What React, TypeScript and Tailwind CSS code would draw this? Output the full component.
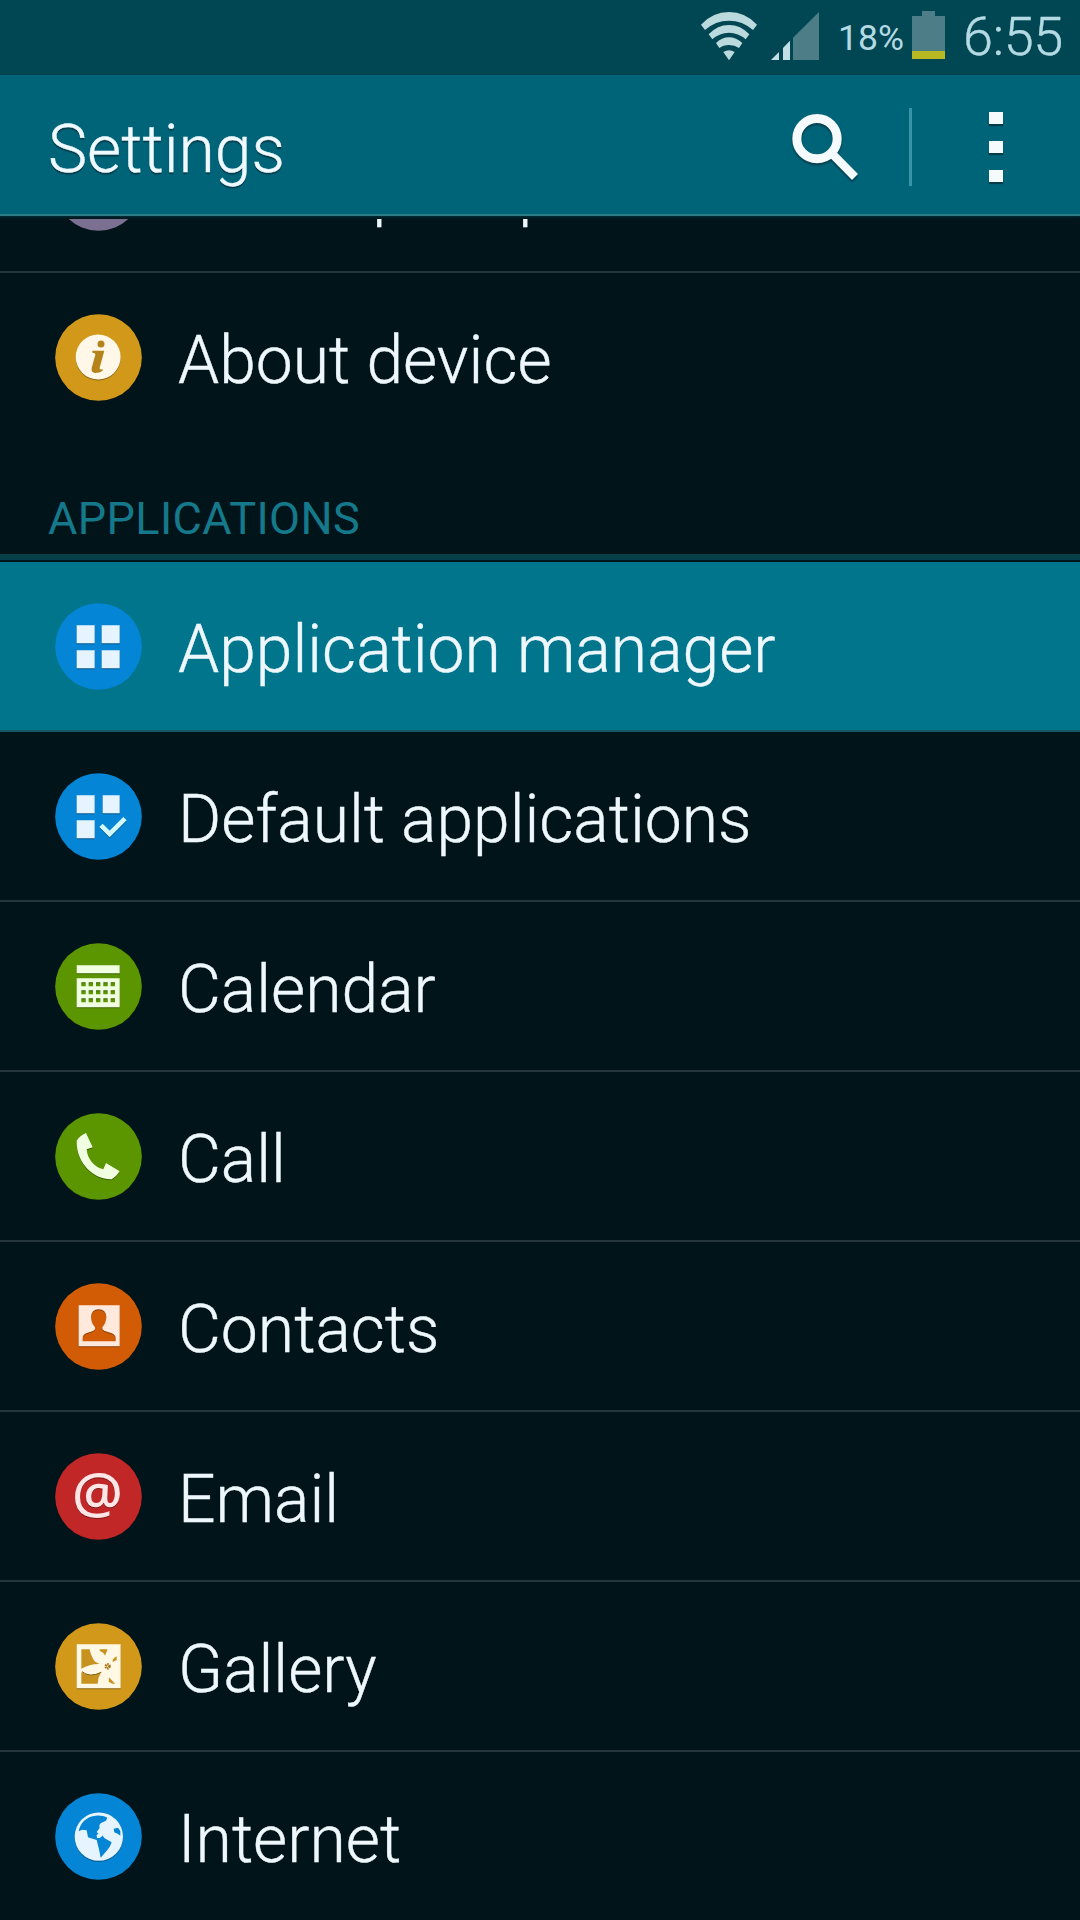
import type { ReactNode } from "react";

const SHADOW = "drop-shadow(0px 3px 1px rgba(0,0,0,0.35))";

function Badge({ color, children }: { color: string; children?: ReactNode }) {
  return (
    <svg className="h-[87px] w-[87px] shrink-0" viewBox="46 38 261 261">
      <circle cx="176.5" cy="168.5" r="130" fill={color} />
      <g style={{ filter: SHADOW }}>{children}</g>
    </svg>
  );
}

const InfoIcon = () => (
  <Badge color="#d2981a">
    <circle cx="175.5" cy="167" r="67.5" fill="#fff8e8" />
    <circle cx="184" cy="128" r="10.5" fill="#b5831c" />
    <path
      d="M158 148H194L180 199Q178 206 189 204V208Q180 215 167 215Q153 214 156 200L167 160Q168 154 158 154Z"
      fill="#b5831c"
    />
  </Badge>
);

const GridIcon = () => (
  <Badge color="#0585d5">
    <path d="M111 105h54v54h-54zM186 105h54v54h-54zM111 180h54v54h-54zM186 180h54v54h-54z" fill="#e6f4ff" />
  </Badge>
);

const GridCheckIcon = () => (
  <Badge color="#0585d5">
    <path d="M111 105h54v54h-54zM189 105h51v54h-51zM111 180h54v54h-54z" fill="#e6f4ff" />
    <path d="M184 195L210 221L256 175" fill="none" stroke="#d2f8ff" strokeWidth="14" />
  </Badge>
);

const CalendarIcon = () => (
  <Badge color="#5b9500">
    <path d="M111 105h129v24h-129z" fill="#efffe0" />
    <path
      fillRule="evenodd"
      fill="#efffe0"
      d="M111 144h129v87h-129zM125 156h13v12h-13zM147 156h13v12h-13zM169 156h13v12h-13zM191 156h13v12h-13zM213 156h13v12h-13zM125 180h13v12h-13zM147 180h13v12h-13zM169 180h13v12h-13zM191 180h13v12h-13zM213 180h13v12h-13zM125 204h13v12h-13zM147 204h13v12h-13zM169 204h13v12h-13zM191 204h13v12h-13zM213 204h13v12h-13z"
    />
  </Badge>
);

const CallIcon = () => (
  <Badge color="#5b9500">
    <path
      d="M139 98L159 141L141 147C143 176 164 201 191 207L199 188L240 213C234 223 226 230 216 237C168 239 109 194 111 121C117 111 127 104 139 98Z"
      fill="#efffe0"
    />
  </Badge>
);

const ContactsIcon = () => (
  <Badge color="#d25c06">
    <path
      fillRule="evenodd"
      fill="#ffe9dc"
      d="M117 105H240V228H117ZM129 213H228V203Q227 192 214 188L195 182Q187 179 188 171Q199 159 200 141Q199 117 177 117Q155 117 154 141Q155 159 166 171Q168 179 160 182L142 188Q129 192 129 203Z"
    />
  </Badge>
);

const EmailIcon = () => (
  <Badge color="#c12727">
    <text
      x="173.5"
      y="219"
      textAnchor="middle"
      fontFamily="'Open Sans', 'Noto Sans', sans-serif"
      fontWeight="600"
      fontSize="170"
      fill="#ffe6e6"
    >
      @
    </text>
  </Badge>
);

const GalleryIcon = () => (
  <Badge color="#d2981a">
    <path d="M111 102H243V234H111Z" fill="#fff8e4" />
    <path
      d="M125 117H150Q154 139 166 154L180 161Q151 160 125 175ZM180 117H204L196 136Q192 125 180 122ZM219 149Q223 141 231 138V149L219 155ZM125 185Q151 204 184 186Q175 201 174 220H125ZM208 201L227 221Q216 221 207 214Z"
      fill="#c8921f"
    />
    <path d="M127 184Q150 203 185 186" fill="none" stroke="#80631a" strokeWidth="3" />
    <circle cx="204" cy="168" r="5.500" fill="none" stroke="#a57516" strokeWidth="8" strokeDasharray="4 1.500" />
  </Badge>
);

const InternetIcon = () => (
  <Badge color="#0585d5">
    <circle cx="177.500" cy="169" r="72.500" fill="#e6f4ff" />
    <path
      d="M117 153C121 129 140 108 169 106C181 105 194 107 203 112L199 121L184 128Q177 134 180 143L171 155Q176 163 187 164L195 174L216 186Q211 201 203 209L183 232L178 207L171 179L145 171L141 150L127 148ZM222 145L235 142L242 152V166L234 160L224 156Z"
      fill="#0585d5"
    />
    <path d="M171 163L180 159Q190 160 188 167L180 173L172 173Z" fill="#e6f4ff" />
  </Badge>
);

function Row({ icon, label, active = false, last = false }: { icon: ReactNode; label: string; active?: boolean; last?: boolean }) {
  return (
    <li
      className={`flex h-[170px] shrink-0 items-center border-b-2 pl-[55px] ${active ? "bg-[#00758c]" : ""} ${
        last ? "border-transparent" : active ? "border-[#175766]" : "border-[#26363d]"
      }`}
    >
      {icon}
      <span className="ml-[36px] pt-[7px] text-[66px] leading-[78px] font-light whitespace-nowrap text-[#eef8fc] [-webkit-text-stroke:0.4px_#eef8fc]">
        {label}
      </span>
    </li>
  );
}

function StatusBar() {
  return (
    <div className="flex h-[75px] shrink-0 items-start bg-[#004753] pl-[701px] text-[#b4dbe3]">
      <svg className="mt-[12px] h-[49px] w-[56px] shrink-0" viewBox="63 36 168 147" fill="#bbdade">
        <path d="M63 74Q98 36 147 36T231 74L219 90Q188 62 147 62T75 90Z" />
        <path d="M86 103Q112 75 147 75T208 103L197 118Q175 98 147 98T97 118Z" />
        <path d="M108 129Q125 112 147 112T187 129L177 144Q164 135 147 135T118 144Z" />
        <path d="M130 156Q147 145 164 156L147 181Z" />
      </svg>
      <svg className="mt-[12px] ml-[14px] h-[48px] w-[48px] shrink-0" viewBox="273 36 144 144">
        <path d="M273 180L297 156V180ZM309 144L330 122V180H309Z" fill="#c2e0e3" />
        <path d="M339 113L417 36V180H339Z" fill="#4d7e88" />
      </svg>
      <span className="mt-[17px] ml-[19px] w-[64px] text-[35.5px] leading-[42px] whitespace-nowrap">18%</span>
      <svg className="mt-[11px] ml-[10px] h-[48px] w-[33px] shrink-0" viewBox="696 33 99 144">
        <path d="M726 33H765V48H795V153H696V48H726Z" fill="#4d7e88" />
        <path d="M696 153H795V177H696Z" fill="#b8b823" />
      </svg>
      <span className="mt-[5px] ml-[18px] text-[54px] leading-[64px] font-light tracking-[-0.3px] whitespace-nowrap [-webkit-text-stroke:0.4px_#b4dbe3]">
        6:55
      </span>
    </div>
  );
}

function ActionBar() {
  return (
    <header className="flex h-[141px] shrink-0 items-center border-b-2 border-[#2c7b89] bg-[#006479] pl-[48px]">
      <h1 className="w-[744px] pt-[10px] text-[66px] leading-[76px] font-light text-[#eefaff] [-webkit-text-stroke:0.4px_#eefaff] [text-shadow:0_2px_1px_#063b49]">
        Settings
      </h1>
      <svg
        className="mt-[6px] h-[68px] w-[68px] shrink-0"
        viewBox="336 341 204 204"
        style={{ filter: "drop-shadow(0px 2px 1px #063b49)" }}
      >
        <circle cx="411" cy="415" r="60.500" fill="none" stroke="#f5fbfd" strokeWidth="27" />
        <path d="M460 464L525 530" stroke="#f5fbfd" strokeWidth="25" />
      </svg>
      <span className="mt-[4px] ml-[49px] h-[78px] w-[3px] bg-[#3795a7]" />
      <div className="ml-[77px] flex flex-col gap-[17px] pt-[5px]">
        <span className="h-[12px] w-[14px] bg-[#f5fbfd] shadow-[0_2px_1px_#063b49]" />
        <span className="h-[12px] w-[14px] bg-[#f5fbfd] shadow-[0_2px_1px_#063b49]" />
        <span className="h-[12px] w-[14px] bg-[#f5fbfd] shadow-[0_2px_1px_#063b49]" />
      </div>
    </header>
  );
}

export default function App() {
  return (
    <div className="flex h-[1920px] w-[1080px] flex-col overflow-hidden bg-[#00141a] font-['Roboto',sans-serif]">
      <StatusBar />
      <ActionBar />
      <div className="h-[3px] shrink-0 bg-linear-to-b from-[#002b36] to-[#00141a]" />
      <ul className="flex h-[54px] shrink-0 flex-col justify-end overflow-hidden">
        <Row icon={<Badge color="#7b7092" />} label="Developer options" />
      </ul>
      <ul className="h-[170px] shrink-0">
        <Row icon={<InfoIcon />} label="About device" last />
      </ul>
      <h2 className="h-[111px] shrink-0 pt-[49px] pl-[48px] text-[45px] leading-[54px] tracking-[0.4px] text-[#15798b]">
        APPLICATIONS
      </h2>
      <div className="mb-[2px] h-[6px] shrink-0 bg-[#063f4a]" />
      <ul className="shrink-0">
        <Row icon={<GridIcon />} label="Application manager" active />
        <Row icon={<GridCheckIcon />} label="Default applications" />
        <Row icon={<CalendarIcon />} label="Calendar" />
        <Row icon={<CallIcon />} label="Call" />
        <Row icon={<ContactsIcon />} label="Contacts" />
        <Row icon={<EmailIcon />} label="Email" />
        <Row icon={<GalleryIcon />} label="Gallery" />
        <Row icon={<InternetIcon />} label="Internet" last />
      </ul>
    </div>
  );
}
